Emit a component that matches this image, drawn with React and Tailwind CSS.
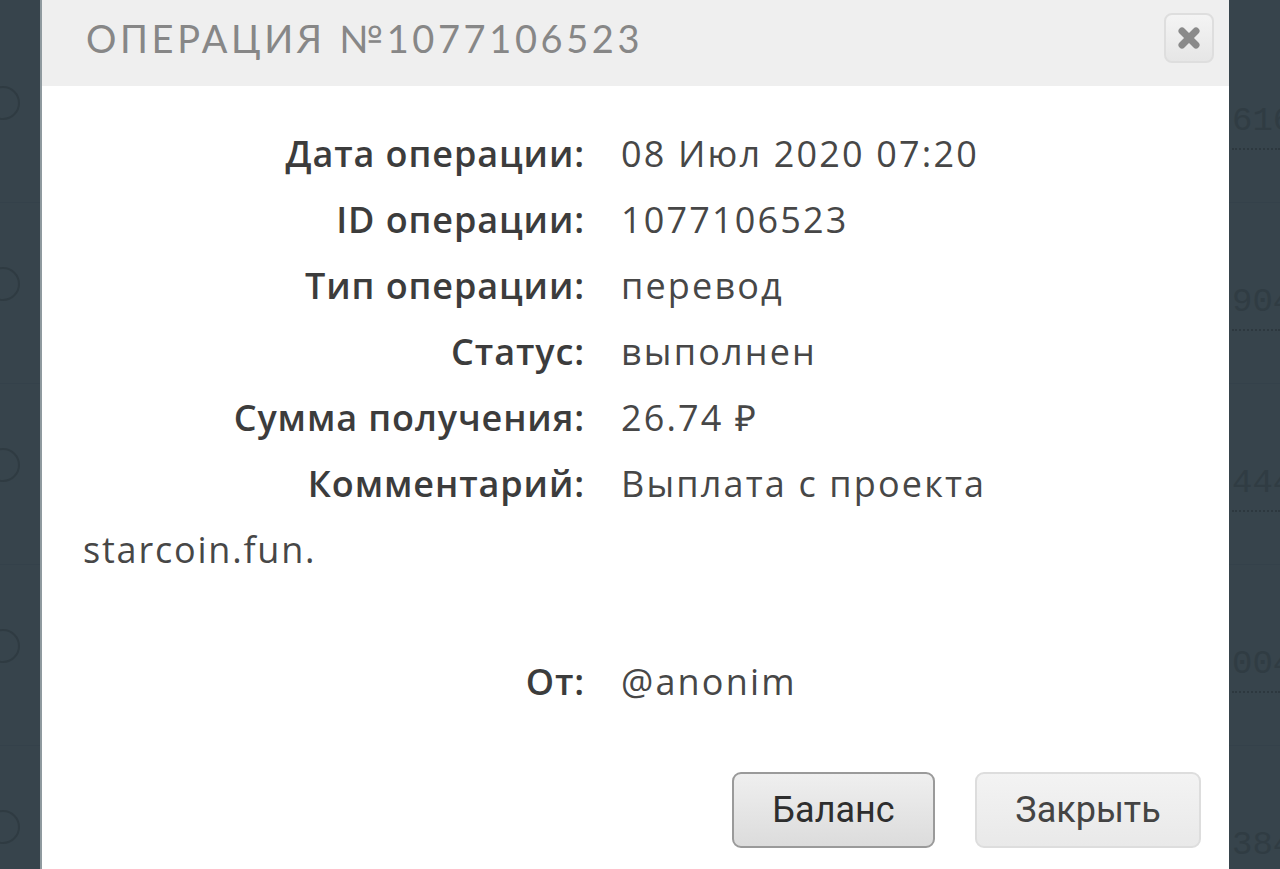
import { X } from 'lucide-react';

const rows = [
  { label: 'Дата операции:', value: '08 Июл 2020 07:20' },
  { label: 'ID операции:', value: '1077106523' },
  { label: 'Тип операции:', value: 'перевод' },
  { label: 'Статус:', value: 'выполнен' },
  { label: 'Сумма получения:', value: '26.74 ₽' },
  { label: 'Комментарий:', value: 'Выплата с проекта' },
];

const bgDigits = ['616', '904', '444', '004', '384'];

export default function App() {
  return (
    <div className="relative h-[869px] w-[1280px] overflow-hidden bg-[#37444c] font-['Open_Sans',sans-serif]">
      {/* фон: строки списка под модальным окном */}
      <div className="flex flex-col pt-[22px]">
        {bgDigits.map((d, i) => (
          <div key={i} className="flex h-[181px] items-start justify-between border-b border-[#34414a]">
            <div className="mt-[64px] -ml-[14px] h-[34px] w-[34px] rounded-full border-2 border-[#2f3b42]" />
            <div className="mt-[82px] w-[48px] font-['Liberation_Mono',monospace] text-[34px] leading-none text-[#303c43]">
              <div>{d}</div>
              <div className="mt-[10px] border-b-2 border-dotted border-[#2d383f]" />
            </div>
          </div>
        ))}
      </div>

      {/* модальное окно */}
      <div className="absolute left-[40px] top-0 flex h-[869px] w-[1189px] flex-col border-l-[2px] border-[#8f9a9f] bg-white">
        <div className="flex h-[86px] items-start justify-between bg-[#efefef] pl-[44px] pr-[15px]">
          <h1 className="mt-[10px] font-['Lato',sans-serif] text-[38px] font-normal tracking-[0.095em] text-[#878787]">
            ОПЕРАЦИЯ №1077106523
          </h1>
          <button className="mt-[13px] flex h-[50px] w-[50px] items-center justify-center rounded-[8px] border-2 border-[#dedede] bg-gradient-to-b from-[#f4f4f4] to-[#e6e6e6]">
            <X size={28} strokeWidth={6} className="text-[#8a8a8a]" />
          </button>
        </div>

        <div className="flex flex-col pt-[35px] text-[36px] leading-[66px]">
          {rows.map((r) => (
            <div key={r.label} className="flex">
              <div className="w-[543px] text-right font-semibold tracking-[0.025em] text-[#3c3c3c]">{r.label}</div>
              <div className="pl-[36px] tracking-[0.06em] text-[#474747]">{r.value}</div>
            </div>
          ))}
          <div className="pl-[41px] tracking-[0.05em] text-[#474747]">starcoin.fun.</div>
          <div className="h-[66px]" />
          <div className="flex">
            <div className="w-[543px] text-right font-semibold tracking-[0.025em] text-[#3c3c3c]">От:</div>
            <div className="pl-[36px] tracking-[0.06em] text-[#474747]">@anonim</div>
          </div>
        </div>

        <div className="mt-[57px] flex justify-end gap-[40px] pr-[28px] font-['Roboto',sans-serif] text-[36px]">
          <button className="h-[76px] w-[203px] rounded-[9px] border-2 border-[#9a9a9a] bg-gradient-to-b from-[#efefef] to-[#dcdcdc] text-[#2e2e2e]">
            Баланс
          </button>
          <button className="h-[76px] w-[226px] rounded-[9px] border-2 border-[#dddddd] bg-gradient-to-b from-[#f3f3f3] to-[#e9e9e9] text-[#444]">
            Закрыть
          </button>
        </div>
      </div>
    </div>
  );
}
